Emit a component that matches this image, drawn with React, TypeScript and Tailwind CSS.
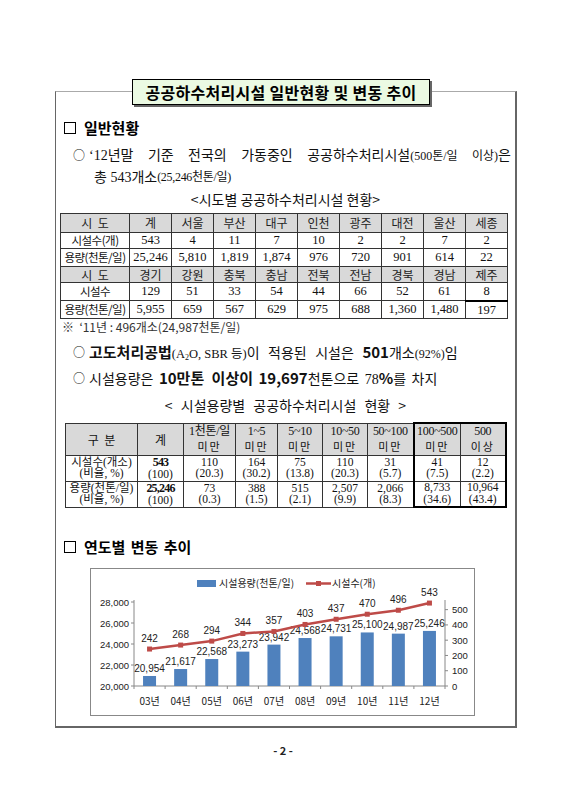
import React from "react";

const serif = "font-['Liberation_Serif','Noto_Sans_CJK_KR',serif]";
const sans = "font-['Noto_Sans_CJK_KR',sans-serif]";

const years = ["03년", "04년", "05년", "06년", "07년", "08년", "09년", "10년", "11년", "12년"];
const caps = [20954, 21617, 22568, 23273, 23942, 24568, 24731, 25100, 24987, 25246];
const counts = [242, 268, 294, 344, 357, 403, 437, 470, 496, 543];

function Chart() {
  const X0 = 134;
  const X1 = 445;
  const Y0 = 684;
  const cw = (X1 - X0) / 10;
  const cx = (i: number) => X0 + cw * (i + 0.5);
  const yl = (v: number) => Y0 - ((v - 20000) / 8000) * 84;
  const yr = (v: number) => Y0 - (v / 550) * 84;
  const fnum = (n: number) => n.toLocaleString("en-US");
  const pts = counts.map((c, i) => `${cx(i)},${yr(c)}`).join(" ");
  return (
    <svg width={383} height={146} viewBox="91 567 383 146">
      <rect x={197} y={578} width={19} height={7} fill="#4f81bd" />
      <text x={219} y={585} fontSize={10} fill="#222" fontFamily="Noto Sans CJK KR, sans-serif">
        시설용량(천톤/일)
      </text>
      <line x1={306} y1={581.5} x2={331} y2={581.5} stroke="#be4b48" strokeWidth={2.5} />
      <rect x={316} y={579} width={5} height={5} fill="#be4b48" />
      <text x={332} y={585} fontSize={10} fill="#222" fontFamily="Noto Sans CJK KR, sans-serif">
        시설수(개)
      </text>
      <line x1={X0} y1={598} x2={X0} y2={Y0} stroke="#888" />
      <line x1={X1} y1={598} x2={X1} y2={Y0} stroke="#888" />
      <line x1={X0} y1={Y0} x2={X1} y2={Y0} stroke="#888" />
      {[20000, 22000, 24000, 26000, 28000].map((v) => (
        <g key={v}>
          <line x1={X0 - 3} y1={yl(v)} x2={X0} y2={yl(v)} stroke="#888" />
          <text x={X0 - 5} y={yl(v) + 3.5} fontSize={9.5} textAnchor="end" fill="#222" fontFamily="Liberation Sans, sans-serif">
            {fnum(v)}
          </text>
        </g>
      ))}
      {[0, 100, 200, 300, 400, 500].map((v) => (
        <g key={v}>
          <line x1={X1} y1={yr(v)} x2={X1 + 3} y2={yr(v)} stroke="#888" />
          <text x={X1 + 7} y={yr(v) + 3.5} fontSize={9.5} fill="#222" fontFamily="Liberation Sans, sans-serif">
            {v}
          </text>
        </g>
      ))}
      {Array.from({ length: 11 }).map((_, i) => (
        <line key={i} x1={X0 + cw * i} y1={Y0} x2={X0 + cw * i} y2={Y0 + 3} stroke="#888" />
      ))}
      {years.map((y, i) => (
        <text key={y} x={cx(i)} y={703} fontSize={10} textAnchor="middle" fill="#222" fontFamily="Noto Sans CJK KR, sans-serif">
          {y}
        </text>
      ))}
      {caps.map((v, i) => (
        <g key={i}>
          <rect x={cx(i) - 6.5} y={yl(v)} width={13} height={Y0 - yl(v)} fill="#4f81bd" />
          <text x={cx(i)} y={yl(v) - 4} fontSize={10} textAnchor="middle" fill="#222" fontFamily="Liberation Sans, sans-serif">
            {fnum(v)}
          </text>
        </g>
      ))}
      <polyline points={pts} fill="none" stroke="#be4b48" strokeWidth={2.5} />
      {counts.map((c, i) => (
        <g key={i}>
          <rect x={cx(i) - 2.5} y={yr(c) - 2.5} width={5} height={5} fill="#be4b48" />
          <text x={cx(i)} y={yr(c) - 7} fontSize={10} textAnchor="middle" fill="#222" fontFamily="Liberation Sans, sans-serif">
            {c}
          </text>
        </g>
      ))}
    </svg>
  );
}

const cell = "border border-[#333] p-0 leading-none";
const hcell = "border border-[#333] p-0 leading-none bg-[#d9d9d9]";

function Table1() {
  const r1 = ["시  도", "계", "서울", "부산", "대구", "인천", "광주", "대전", "울산", "세종"];
  const r2 = ["시설수(개)", "543", "4", "11", "7", "10", "2", "2", "7", "2"];
  const r3 = ["용량(천톤/일)", "25,246", "5,810", "1,819", "1,874", "976", "720", "901", "614", "22"];
  const r4 = ["시  도", "경기", "강원", "충북", "충남", "전북", "전남", "경북", "경남", "제주"];
  const r5 = ["시설수", "129", "51", "33", "54", "44", "66", "52", "61", "8"];
  const r6 = ["용량(천톤/일)", "5,955", "659", "567", "629", "975", "688", "1,360", "1,480", "197"];
  const hdr = (r: string[], h: string) => (
    <tr className={h}>
      {r.map((t, i) => (
        <td key={i} className={`${hcell} ${sans} text-[12px] whitespace-pre text-[#222]`}>
          {t}
        </td>
      ))}
    </tr>
  );
  const row = (r: string[], h: string, last?: boolean) => (
    <tr className={h}>
      {r.map((t, i) => (
        <td
          key={i}
          className={`${cell} ${i === 0 ? `${sans} text-[11.5px] tracking-[-0.5px]` : `${serif} text-[12.5px]`} ${last && i === 9 ? "border-b-2 border-b-black" : ""}`}
        >
          {t}
        </td>
      ))}
    </tr>
  );
  return (
    <table className="ml-[4px] w-[448px] table-fixed border-collapse text-center text-[#111]">
      <colgroup>
        <col className="w-[69px]" />
        {Array.from({ length: 9 }).map((_, i) => (
          <col key={i} className="w-[42px]" />
        ))}
      </colgroup>
      <tbody>
        {hdr(r1, "h-[19px]")}
        {row(r2, "h-[16px]")}
        {row(r3, "h-[18px]")}
        {hdr(r4, "h-[16px]")}
        {row(r5, "h-[18px]", true)}
        {row(r6, "h-[18px]")}
      </tbody>
    </table>
  );
}

function Table2() {
  const heads: [string, string?][] = [
    ["구  분"],
    ["계"],
    ["1천톤/일", "미만"],
    ["1~5", "미만"],
    ["5~10", "미만"],
    ["10~50", "미만"],
    ["50~100", "미만"],
    ["100~500", "미만"],
    ["500", "이상"],
  ];
  const d1 = ["110", "164", "75", "110", "31", "41", "12"];
  const p1 = ["(20.3)", "(30.2)", "(13.8)", "(20.3)", "(5.7)", "(7.5)", "(2.2)"];
  const d2 = ["73", "388", "515", "2,507", "2,066", "8,733", "10,964"];
  const p2 = ["(0.3)", "(1.5)", "(2.1)", "(9.9)", "(8.3)", "(34.6)", "(43.4)"];
  const widths = ["w-[72px]", "w-[46px]", "w-[52px]", "w-[42px]", "w-[45px]", "w-[45px]", "w-[46px]", "w-[47px]", "w-[45px]"];
  const thick = (i: number) => (i === 7 ? "border-l-2 border-l-black" : i === 8 ? "border-r-2 border-r-black" : "");
  return (
    <table className="ml-[9px] w-[440px] table-fixed border-collapse text-center text-[#111]">
      <colgroup>
        {widths.map((w, i) => (
          <col key={i} className={w} />
        ))}
      </colgroup>
      <tbody>
        <tr className="h-[32px]">
          {heads.map(([a, b], i) => (
            <td
              key={i}
              className={`${hcell} ${thick(i)} ${i >= 7 ? "border-t-2 border-t-black" : ""} whitespace-pre`}
            >
              <div className={i <= 1 ? `${sans} text-[12px] leading-[17px]` : `${serif} text-[12px] leading-[14px] tracking-[-0.3px]`}>{a}</div>
              {b && <div className={`${sans} text-[11px] leading-[16px] tracking-[2px]`}>{b}</div>}
            </td>
          ))}
        </tr>
        <tr className="h-[26px]">
          <td className={`${cell} ${serif} text-[11.5px] leading-[13px]`}>
            <div>시설수(개소)</div>
            <div>(비율, %)</div>
          </td>
          <td className={`${cell} ${serif} text-[11.5px] leading-[13px]`}>
            <div className="font-bold text-[12px] leading-[13px] tracking-[-0.8px]">543</div>
            <div>(100)</div>
          </td>
          {d1.map((v, i) => (
            <td key={i} className={`${cell} ${thick(i + 2)} ${serif} text-[11.5px] leading-[13px]`}>
              <div>{v}</div>
              <div>{p1[i]}</div>
            </td>
          ))}
        </tr>
        <tr className="h-[26px]">
          <td className={`${cell} ${serif} text-[11.5px] leading-[13px]`}>
            <div>용량(천톤/일)</div>
            <div>(비율, %)</div>
          </td>
          <td className={`${cell} ${serif} text-[11.5px] leading-[13px]`}>
            <div className="font-bold text-[12px] leading-[13px] tracking-[-0.8px]">25,246</div>
            <div>(100)</div>
          </td>
          {d2.map((v, i) => (
            <td key={i} className={`${cell} ${thick(i + 2)} ${i + 2 >= 7 ? "border-b-2 border-b-black" : ""} ${serif} text-[11.5px] leading-[13px]`}>
              <div>{v}</div>
              <div>{p2[i]}</div>
            </td>
          ))}
        </tr>
      </tbody>
    </table>
  );
}

export default function App() {
  return (
    <div className="w-[566px] h-[800px] bg-white overflow-hidden pt-[91px] text-[#111]">
      <div className="ml-[55px] w-[462px] h-[637px] border-t border-t-[#aaa] border-l border-l-[#666] border-r-2 border-r-[#666] border-b-2 border-b-[#666] flex flex-col">
        {/* title */}
        <div className="-mt-[13px] ml-[76px] w-[298px] h-[26px] border border-black bg-[#ebfae3] shadow-[2px_2px_0_#666] flex items-center justify-center">
          <span className={`${sans} font-bold text-[16px] tracking-[0.3px] text-black`}>공공하수처리시설 일반현황 및 변동 추이</span>
        </div>

        {/* heading 1 */}
        <div className="mt-[11px] h-[24px] flex items-center ml-[8px]">
          <span className="w-[12px] h-[12px] border-[1.5px] border-black" />
          <span className={`${sans} font-bold text-[15px] ml-[8px] text-black`}>일반현황</span>
        </div>

        {/* bullet 1 */}
        <div className="mt-[4px] h-[22px] flex items-center ml-[17px] mr-[4px]">
          <span className={`${sans} text-[12px] w-[16px]`}>○</span>
          <span className={`${serif} text-[14px] flex-1 whitespace-nowrap flex justify-between`}>
            <span>‘12년말</span>
            <span>기준</span>
            <span>전국의</span>
            <span>가동중인</span>
            <span>
              공공하수처리시설<span className="text-[12px]">(500톤/일</span>
            </span>
            <span>
              <span className="text-[12px]">이상)</span>은
            </span>
          </span>
        </div>
        <div className={`h-[22px] flex items-center ml-[38px] ${serif} text-[14px]`}>
          총&nbsp;543개소<span className="text-[12px] tracking-[-0.3px]">(25,246천톤/일)</span>
        </div>

        {/* caption 1 */}
        <div className={`h-[22px] flex items-center justify-center ${sans} text-[14px] text-[#111]`}>
          &lt;시도별 공공하수처리시설 현황&gt;
        </div>

        <div className="mt-[3px]">
          <Table1 />
        </div>

        {/* note */}
        <div className={`h-[16px] flex items-center ml-[6px] ${sans} text-[12px] text-[#333]`}>
          ※ &nbsp;‘11년 : 496개소(24,987천톤/일)
        </div>

        {/* bullet 2 */}
        <div className="mt-[6px] h-[22px] flex items-center ml-[17px]">
          <span className={`${sans} text-[12px] w-[16px]`}>○</span>
          <span className={`${serif} text-[14px] [word-spacing:5px]`}>
            <span className={`${sans} font-bold text-[15px] [word-spacing:0]`}>고도처리공법</span>
            <span className="text-[12.5px] [word-spacing:0]">
              (A<sub className="text-[8px]">2</sub>O, SBR 등)
            </span>
            이 적용된 시설은 <span className={`${sans} font-bold text-[15px]`}>501</span>개소
            <span className="text-[12px] [word-spacing:0]">(92%)</span>임
          </span>
        </div>

        {/* bullet 3 */}
        <div className="mt-[4px] h-[22px] flex items-center ml-[17px]">
          <span className={`${sans} text-[12px] w-[16px]`}>○</span>
          <span className={`${serif} text-[14px] [word-spacing:2px]`}>
            시설용량은 <span className={`${sans} font-bold text-[15px] [word-spacing:4px]`}>10만톤 이상이</span>{" "}
            <span className={`${sans} font-bold text-[15px]`}>19,697</span>천톤으로 78
            <span className={`${sans} font-bold text-[15px]`}>%</span>를 차지
          </span>
        </div>

        {/* caption 2 */}
        <div className={`mt-[5px] h-[22px] flex items-center justify-center ${sans} text-[14px] [word-spacing:5px]`}>
          &lt; 시설용량별 공공하수처리시설 현황 &gt;
        </div>

        <div className="mt-[6px]">
          <Table2 />
        </div>

        {/* heading 2 */}
        <div className="mt-[27px] h-[24px] flex items-center ml-[8px]">
          <span className="w-[12px] h-[12px] border-[1.5px] border-black" />
          <span className={`${sans} font-bold text-[15px] ml-[8px] text-black [word-spacing:2px]`}>연도별 변동 추이</span>
        </div>

        {/* chart */}
        <div className="mt-[9px] ml-[34px] w-[385px] h-[148px] border border-[#888] bg-white">
          <Chart />
        </div>
      </div>

      <div className={`mt-[14px] h-[16px] flex items-center justify-center ${sans} font-bold text-[11px] text-[#222]`}>
        - 2 -
      </div>
    </div>
  );
}
